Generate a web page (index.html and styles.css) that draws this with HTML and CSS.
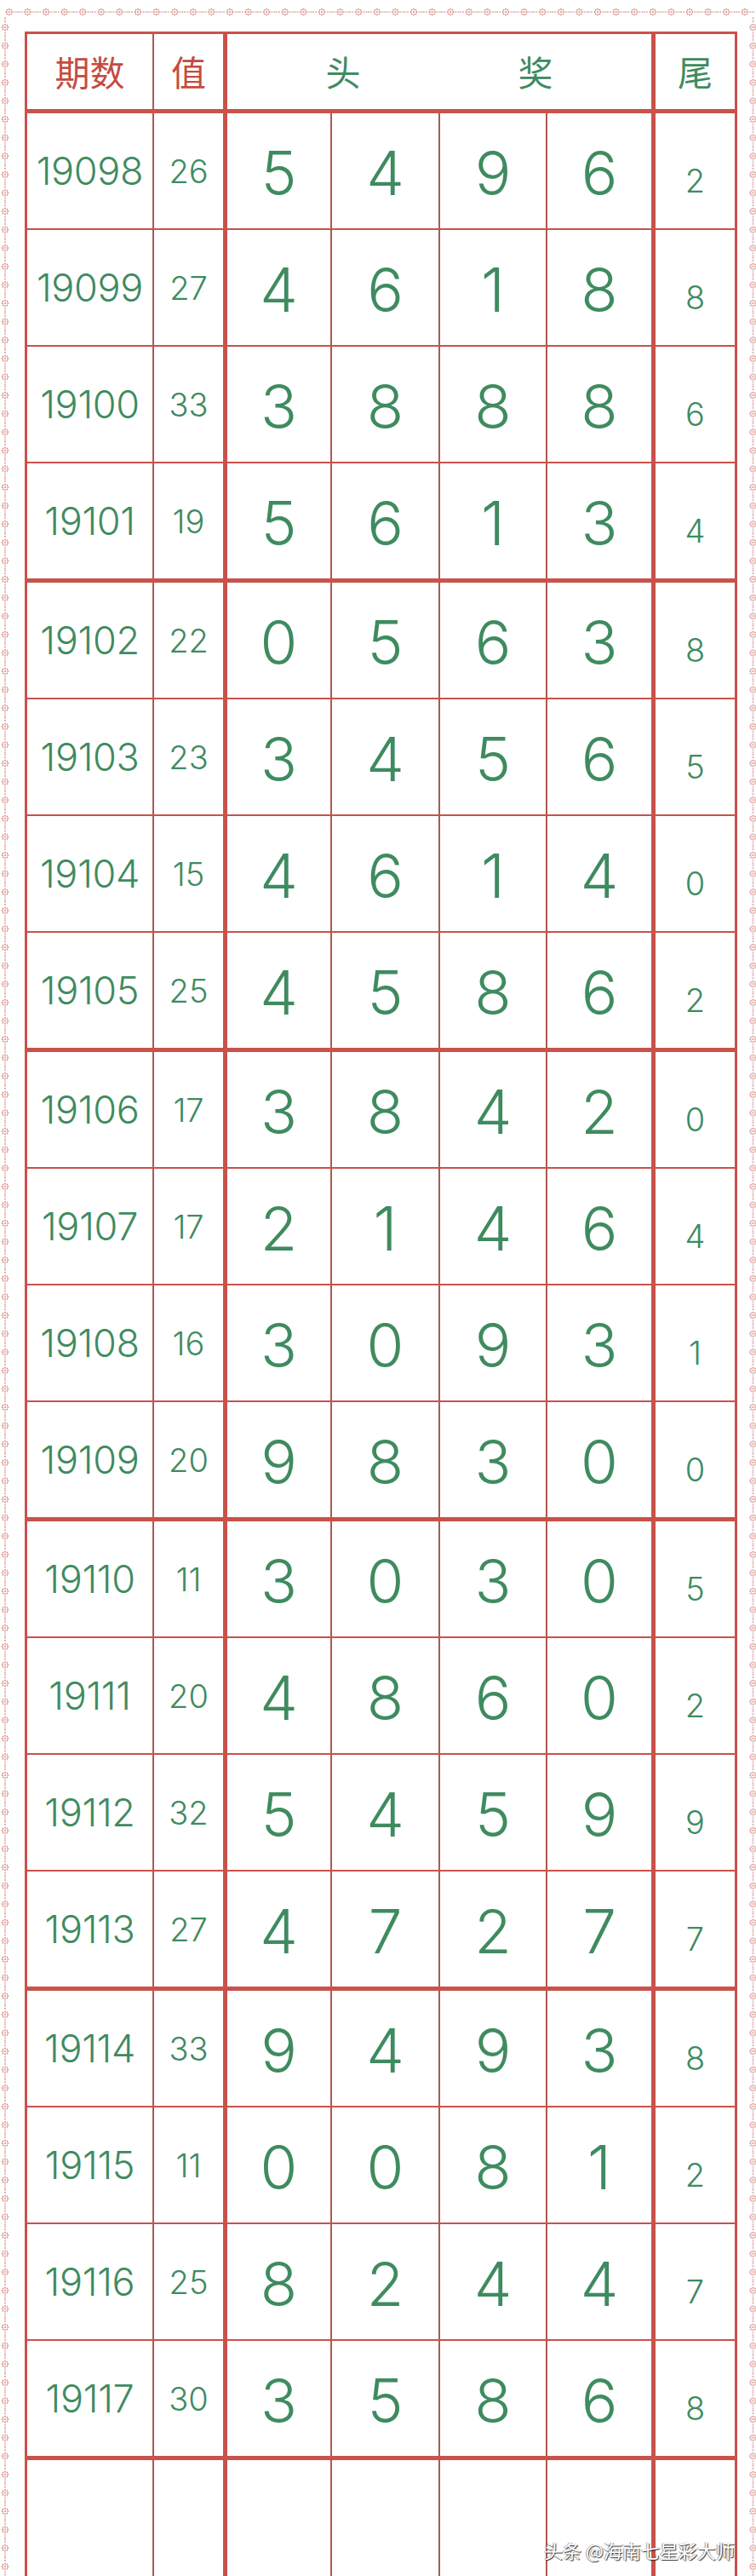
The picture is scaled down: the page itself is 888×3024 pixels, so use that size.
FILE: index.html
```html
<!DOCTYPE html>
<html lang="zh-CN">
<head>
<meta charset="utf-8">
<title>七星彩</title>
<link rel="stylesheet" href="styles.css">
</head>
<body>
<div class="frame">
  <svg class="edge-top" width="888" height="12" aria-hidden="true">
    <defs>
      <pattern id="flowerH" x="0" y="0" width="21.6" height="12" patternUnits="userSpaceOnUse">
        <g fill="#cd766c">
          <circle cx="10.8" cy="6" r="0.9"/>
          <circle cx="14.1" cy="6" r="0.9"/><circle cx="7.5" cy="6" r="0.9"/>
          <circle cx="10.8" cy="2.7" r="0.9"/><circle cx="10.8" cy="9.3" r="0.9"/>
          <circle cx="13.2" cy="3.6" r="0.85"/><circle cx="8.4" cy="3.6" r="0.85"/>
          <circle cx="13.2" cy="8.4" r="0.85"/><circle cx="8.4" cy="8.4" r="0.85"/>
        </g>
        <g stroke="#cd766c" stroke-width="1.1">
          <line x1="0" y1="6" x2="5.8" y2="6" stroke-dasharray="1.8 1.2"/>
          <line x1="16.2" y1="6" x2="21.6" y2="6" stroke-dasharray="1.8 1.2"/>
        </g>
      </pattern>
    </defs>
    <rect x="6" y="0" width="880" height="12" fill="url(#flowerH)"/>
  </svg>
  <svg class="edge-left" width="12" height="3004" aria-hidden="true">
    <defs>
      <pattern id="flowerV" x="0" y="1.2" width="12" height="21.6" patternUnits="userSpaceOnUse">
        <g fill="#cd766c">
          <circle cx="6" cy="10.8" r="0.9"/>
          <circle cx="6" cy="14.1" r="0.9"/><circle cx="6" cy="7.5" r="0.9"/>
          <circle cx="2.7" cy="10.8" r="0.9"/><circle cx="9.3" cy="10.8" r="0.9"/>
          <circle cx="3.6" cy="13.2" r="0.85"/><circle cx="3.6" cy="8.4" r="0.85"/>
          <circle cx="8.4" cy="13.2" r="0.85"/><circle cx="8.4" cy="8.4" r="0.85"/>
        </g>
        <g stroke="#cd766c" stroke-width="1.1">
          <line x1="6" y1="0" x2="6" y2="5.8" stroke-dasharray="1.8 1.2"/>
          <line x1="6" y1="16.2" x2="6" y2="21.6" stroke-dasharray="1.8 1.2"/>
        </g>
      </pattern>
    </defs>
    <rect x="0" y="-6" width="12" height="3010" fill="url(#flowerV)"/>
  </svg>

  <main class="sheet">
    <div class="row head">
      <div class="c c1 red">期数</div>
      <div class="c c2 red">值</div>
      <div class="c span"><span>头</span><span>奖</span></div>
      <div class="c c7">尾</div>
    </div>
    <div id="rows"></div>
    <div class="row empty">
      <div class="c c1"></div><div class="c c2"></div><div class="c c3"></div><div class="c c4"></div><div class="c c5"></div><div class="c c6"></div><div class="c c7"></div>
    </div>
  </main>

  <svg class="edge-right" width="8" height="3004" aria-hidden="true">
    <defs>
      <pattern id="flowerR" x="-1.5" y="1.2" width="12" height="21.6" patternUnits="userSpaceOnUse">
        <g fill="#cd766c">
          <circle cx="6" cy="10.8" r="0.9"/>
          <circle cx="6" cy="14.1" r="0.9"/><circle cx="6" cy="7.5" r="0.9"/>
          <circle cx="2.7" cy="10.8" r="0.9"/><circle cx="9.3" cy="10.8" r="0.9"/>
          <circle cx="3.6" cy="13.2" r="0.85"/><circle cx="3.6" cy="8.4" r="0.85"/>
          <circle cx="8.4" cy="13.2" r="0.85"/><circle cx="8.4" cy="8.4" r="0.85"/>
        </g>
        <g stroke="#cd766c" stroke-width="1.1">
          <line x1="6" y1="0" x2="6" y2="5.8" stroke-dasharray="1.8 1.2"/>
          <line x1="6" y1="16.2" x2="6" y2="21.6" stroke-dasharray="1.8 1.2"/>
        </g>
      </pattern>
    </defs>
    <rect x="0" y="-6" width="8" height="3010" fill="url(#flowerR)"/>
  </svg>
</div>
<div class="watermark">头条 @海南七星彩大师</div>
<script src="app.js"></script>
</body>
</html>
```

FILE: app.js
```js
const data = [
  ["19098","26","5","4","9","6","2"],
  ["19099","27","4","6","1","8","8"],
  ["19100","33","3","8","8","8","6"],
  ["19101","19","5","6","1","3","4"],
  ["19102","22","0","5","6","3","8"],
  ["19103","23","3","4","5","6","5"],
  ["19104","15","4","6","1","4","0"],
  ["19105","25","4","5","8","6","2"],
  ["19106","17","3","8","4","2","0"],
  ["19107","17","2","1","4","6","4"],
  ["19108","16","3","0","9","3","1"],
  ["19109","20","9","8","3","0","0"],
  ["19110","11","3","0","3","0","5"],
  ["19111","20","4","8","6","0","2"],
  ["19112","32","5","4","5","9","9"],
  ["19113","27","4","7","2","7","7"],
  ["19114","33","9","4","9","3","8"],
  ["19115","11","0","0","8","1","2"],
  ["19116","25","8","2","4","4","7"],
  ["19117","30","3","5","8","6","8"]
];
const host = document.getElementById("rows");
data.forEach((r, i) => {
  const row = document.createElement("div");
  row.className = "row data" + (i % 4 === 3 ? " group-end" : "");
  const cls = ["c1 period", "c2 sum", "c3 big", "c4 big", "c5 big", "c6 big", "c7 tail"];
  r.forEach((v, j) => {
    const cell = document.createElement("div");
    cell.className = "c " + cls[j];
    cell.textContent = v;
    row.appendChild(cell);
  });
  host.appendChild(row);
});
```

FILE: styles.css
```css
:root {
  --line: #c9524b;
  --thin-v: #ad5950;
  --green: #3f8b60;
  --red: #c54a42;
}
html, body {
  margin: 0;
  padding: 0;
  height: 3024px;
  overflow: hidden;
  background: #fff;
}
body {
  position: relative;
  font-family: "Inter", "Liberation Sans", "Noto Sans CJK SC", sans-serif;
  color: var(--green);
}
.frame {
  display: grid;
  grid-template-columns: 12px 868px 8px;
  grid-template-rows: 12px 3004px;
  padding-top: 8px;
  height: 3024px;
  box-sizing: border-box;
  overflow: hidden;
}
.edge-top {
  grid-column: 1 / -1;
  display: block;
}
.edge-left, .edge-right {
  display: block;
}
.sheet {
  margin: 17px 0 0 17px;
  width: 837px;
  border: 3px solid var(--line);
  border-bottom: none;
  box-sizing: border-box;
  overflow: hidden;
}
.row {
  display: flex;
  box-sizing: border-box;
  border-bottom: 2px solid var(--line);
}
.row.head {
  height: 93px;
  border-bottom-width: 5px;
}
.row.data {
  height: 137px;
}
.row.data.group-end {
  height: 140px;
  border-bottom-width: 5px;
}
.row.empty {
  height: 200px;
  border-bottom: none;
}
.c {
  display: flex;
  align-items: center;
  justify-content: center;
  box-sizing: border-box;
  border-right: 2px solid var(--thin-v);
  flex: none;
}
.c1 { width: 149px; }
.c2 { width: 86px; border-right: 5px solid var(--line); }
.c3 { width: 123px; }
.c4 { width: 127px; }
.c5 { width: 126px; }
.c6 { width: 127px; border-right: 5px solid var(--line); }
.c7 { width: 93px; border-right: none; }
.span {
  width: 503px;
  border-right: 5px solid var(--line);
  gap: 185px;
}
.head .c {
  font-family: "Noto Sans CJK SC", sans-serif;
  font-weight: 400;
  font-size: 41px;
  color: var(--green);
  padding-bottom: 2px;
}
.head .red {
  color: var(--red);
}
.period {
  font-size: 45px;
  font-weight: 350;
  letter-spacing: -0.3px;
}
.sum {
  font-size: 38px;
  font-weight: 350;
}
.big {
  font-size: 71px;
  font-weight: 350;
  padding-top: 4px;
}
.tail {
  font-size: 38px;
  font-weight: 350;
  padding-top: 22px;
}
.watermark {
  position: absolute;
  left: 639px;
  top: 2977px;
  font-family: "Noto Sans CJK SC", sans-serif;
  font-size: 22px;
  color: #fff;
  text-shadow: 1px 1px 1px rgba(0, 0, 0, 0.8), -1px 0 1px rgba(0, 0, 0, 0.4);
  white-space: nowrap;
}
```
